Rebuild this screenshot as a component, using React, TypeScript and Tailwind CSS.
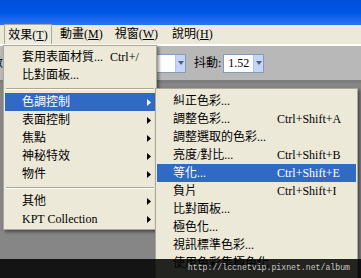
import React from "react";

type Item = { label: string; keys?: string; sub?: boolean; active?: boolean } | "sep";

const mainItems: Item[] = [
  { label: "套用表面材質...", keys: "Ctrl+/" },
  { label: "比對面板..." },
  "sep",
  { label: "色調控制", sub: true, active: true },
  { label: "表面控制", sub: true },
  { label: "焦點", sub: true },
  { label: "神秘特效", sub: true },
  { label: "物件", sub: true },
  "sep",
  { label: "其他", sub: true },
  { label: "KPT Collection", sub: true },
];

const subItems: Item[] = [
  { label: "糾正色彩..." },
  { label: "調整色彩...", keys: "Ctrl+Shift+A" },
  { label: "調整選取的色彩..." },
  { label: "亮度/對比...", keys: "Ctrl+Shift+B" },
  { label: "等化...", keys: "Ctrl+Shift+E", active: true },
  { label: "負片", keys: "Ctrl+Shift+I" },
  { label: "比對面板..." },
  { label: "極色化..." },
  { label: "視訊標準色彩..." },
  { label: "使用色彩集極色化" },
];

const font = { fontFamily: '"Liberation Serif", "Noto Sans CJK TC", serif' };

function Arrow({ white }: { white?: boolean }) {
  return (
    <svg width="4" height="7" viewBox="0 0 4 7" className="mr-[4px] shrink-0">
      <polygon points="0,0 4,3.5 0,7" fill={white ? "#fff" : "#000"} />
    </svg>
  );
}

function MenuList({ items, padL, labelW }: { items: Item[]; padL: string; labelW: string }) {
  return (
    <>
      {items.map((it, i) =>
        it === "sep" ? (
          <div key={i} className="flex h-[9px] items-center px-[1px]">
            <div className="h-[2px] w-full border-t border-[#aca899] border-b border-b-white" />
          </div>
        ) : (
          <div
            key={i}
            className={`flex h-[18px] items-center text-[12px] leading-[18px] ${
              it.active ? "bg-[#316ac5] text-white" : "text-black"
            }`}
          >
            <span className={`${padL} ${labelW} shrink-0 whitespace-nowrap`}>{it.label}</span>
            <span className="flex-1 whitespace-nowrap">{it.keys}</span>
            {it.sub && <Arrow white={it.active} />}
          </div>
        )
      )}
    </>
  );
}

function Combo({ value, w }: { value: string; w: string }) {
  return (
    <div className="flex h-[19px] border border-[#7f9db9] bg-white">
      <div className={`${w} flex items-center pl-[4px] text-[12px] text-black`}>{value}</div>
      <div className="flex w-[10px] items-center justify-center border-l border-[#b2c4ec] bg-[#c6d5f5]">
        <svg width="6" height="4" viewBox="0 0 6 4">
          <polygon points="0,0 6,0 3,4" fill="#4d6185" />
        </svg>
      </div>
    </div>
  );
}

export default function App() {
  return (
    <div className="relative flex h-[278px] w-[361px] flex-col overflow-hidden bg-[#868686]" style={font}>
      {/* title bar */}
      <div className="h-[25px] shrink-0 bg-gradient-to-b from-[#0050dc] via-[#0055e5] to-[#2a74f0]" />

      {/* menu bar */}
      <div className="flex h-[21px] shrink-0 items-end border-b-2 border-white bg-[#ece9d8] text-[12px] text-black">
        <div className="ml-[4px] flex h-[20px] w-[48px] items-center justify-center border border-b-0 border-[#aca899] bg-[#eeebdf]">
          效果(<span className="underline">T</span>)
        </div>
        <div className="ml-[6px] flex h-[20px] items-center px-[2px]">
          動畫(<span className="underline">M</span>)
        </div>
        <div className="ml-[8px] flex h-[20px] items-center px-[2px]">
          視窗(<span className="underline">W</span>)
        </div>
        <div className="ml-[10px] flex h-[20px] items-center px-[2px]">
          說明(<span className="underline">H</span>)
        </div>
      </div>

      {/* toolbar */}
      <div className="flex h-[37px] shrink-0 items-center border-b-[3px] border-[#7c7c7c] bg-[#b8b8b8] text-[12px] text-black">
        <span className="-ml-[9px]">數</span>
        <div className="ml-[129px]">
          <Combo value="0%" w="w-[42px]" />
        </div>
        <span className="ml-[8px]">抖動:</span>
        <div className="ml-[2px]">
          <Combo value="1.52" w="w-[29px]" />
        </div>
      </div>

      <div className="flex-1" />

      {/* main dropdown */}
      <div className="absolute left-[3px] top-[45px] w-[154px] border border-[#aca899] bg-[#ece9d8] px-[1px] pt-[2px] pb-[1px] shadow-[2px_2px_3px_rgba(0,0,0,0.45)]">
        <MenuList items={mainItems} padL="pl-[17px]" labelW="w-[105px]" />
      </div>

      {/* submenu */}
      <div className="absolute left-[155px] top-[88px] h-[220px] w-[203px] border border-[#aca899] bg-[#ece9d8] px-[1px] pt-[3px] shadow-[2px_2px_3px_rgba(0,0,0,0.45)]">
        <MenuList items={subItems} padL="pl-[16px]" labelW="w-[120px]" />
      </div>

      {/* watermark */}
      <div className="absolute bottom-0 left-0 flex h-[19px] w-full items-center justify-end bg-black/85 pr-[11px]">
        <span className="text-[8.2px] text-[#c8c8c8]" style={{ fontFamily: '"Liberation Mono", monospace' }}>
          http://lccnetvip.pixnet.net/album
        </span>
      </div>
    </div>
  );
}
